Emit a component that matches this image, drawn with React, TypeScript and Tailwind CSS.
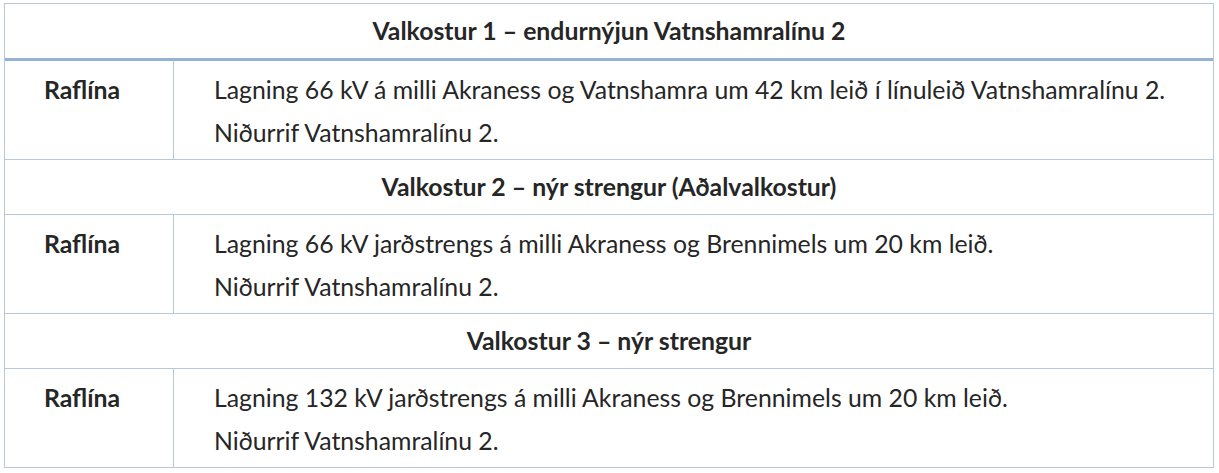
const rows = [
  {
    title: "Valkostur 1 – endurnýjun Vatnshamralínu 2",
    label: "Raflína",
    lines: [
      "Lagning 66 kV á milli Akraness og Vatnshamra um 42 km leið í línuleið Vatnshamralínu 2.",
      "Niðurrif Vatnshamralínu 2.",
    ],
  },
  {
    title: "Valkostur 2 – nýr strengur (Aðalvalkostur)",
    label: "Raflína",
    lines: [
      "Lagning 66 kV jarðstrengs á milli Akraness og Brennimels um 20 km leið.",
      "Niðurrif Vatnshamralínu 2.",
    ],
  },
  {
    title: "Valkostur 3 – nýr strengur",
    label: "Raflína",
    lines: [
      "Lagning 132 kV jarðstrengs á milli Akraness og Brennimels um 20 km leið.",
      "Niðurrif Vatnshamralínu 2.",
    ],
  },
];

export default function App() {
  return (
    <div className="w-[1219px] h-[473px] bg-white pl-[4px] pt-[3px] text-[#262626] font-['Lato',sans-serif] text-[24.8px]">
      <div className="w-[1210px] border border-[#b8c7dc]">
        {rows.map((r, i) => (
          <div key={i}>
            <div
              className={`flex items-center justify-center font-bold ${
                i === 0 ? "h-[57px] border-b-[3px] border-[#95b3d7]" : "h-[56px] border-t border-b border-[#b8c7dc]"
              }`}
            >
              {r.title}
            </div>
            <div className="flex">
              <div className="w-[169px] shrink-0 border-r border-[#b8c7dc] pl-[39px] pt-[7px] pb-[5px] font-bold leading-[43px]">
                {r.label}
              </div>
              <div className="flex-1 pl-[40px] pt-[7px] pb-[5px] leading-[43px]">
                {r.lines.map((l, j) => (
                  <p key={j}>{l}</p>
                ))}
              </div>
            </div>
          </div>
        ))}
      </div>
    </div>
  );
}
